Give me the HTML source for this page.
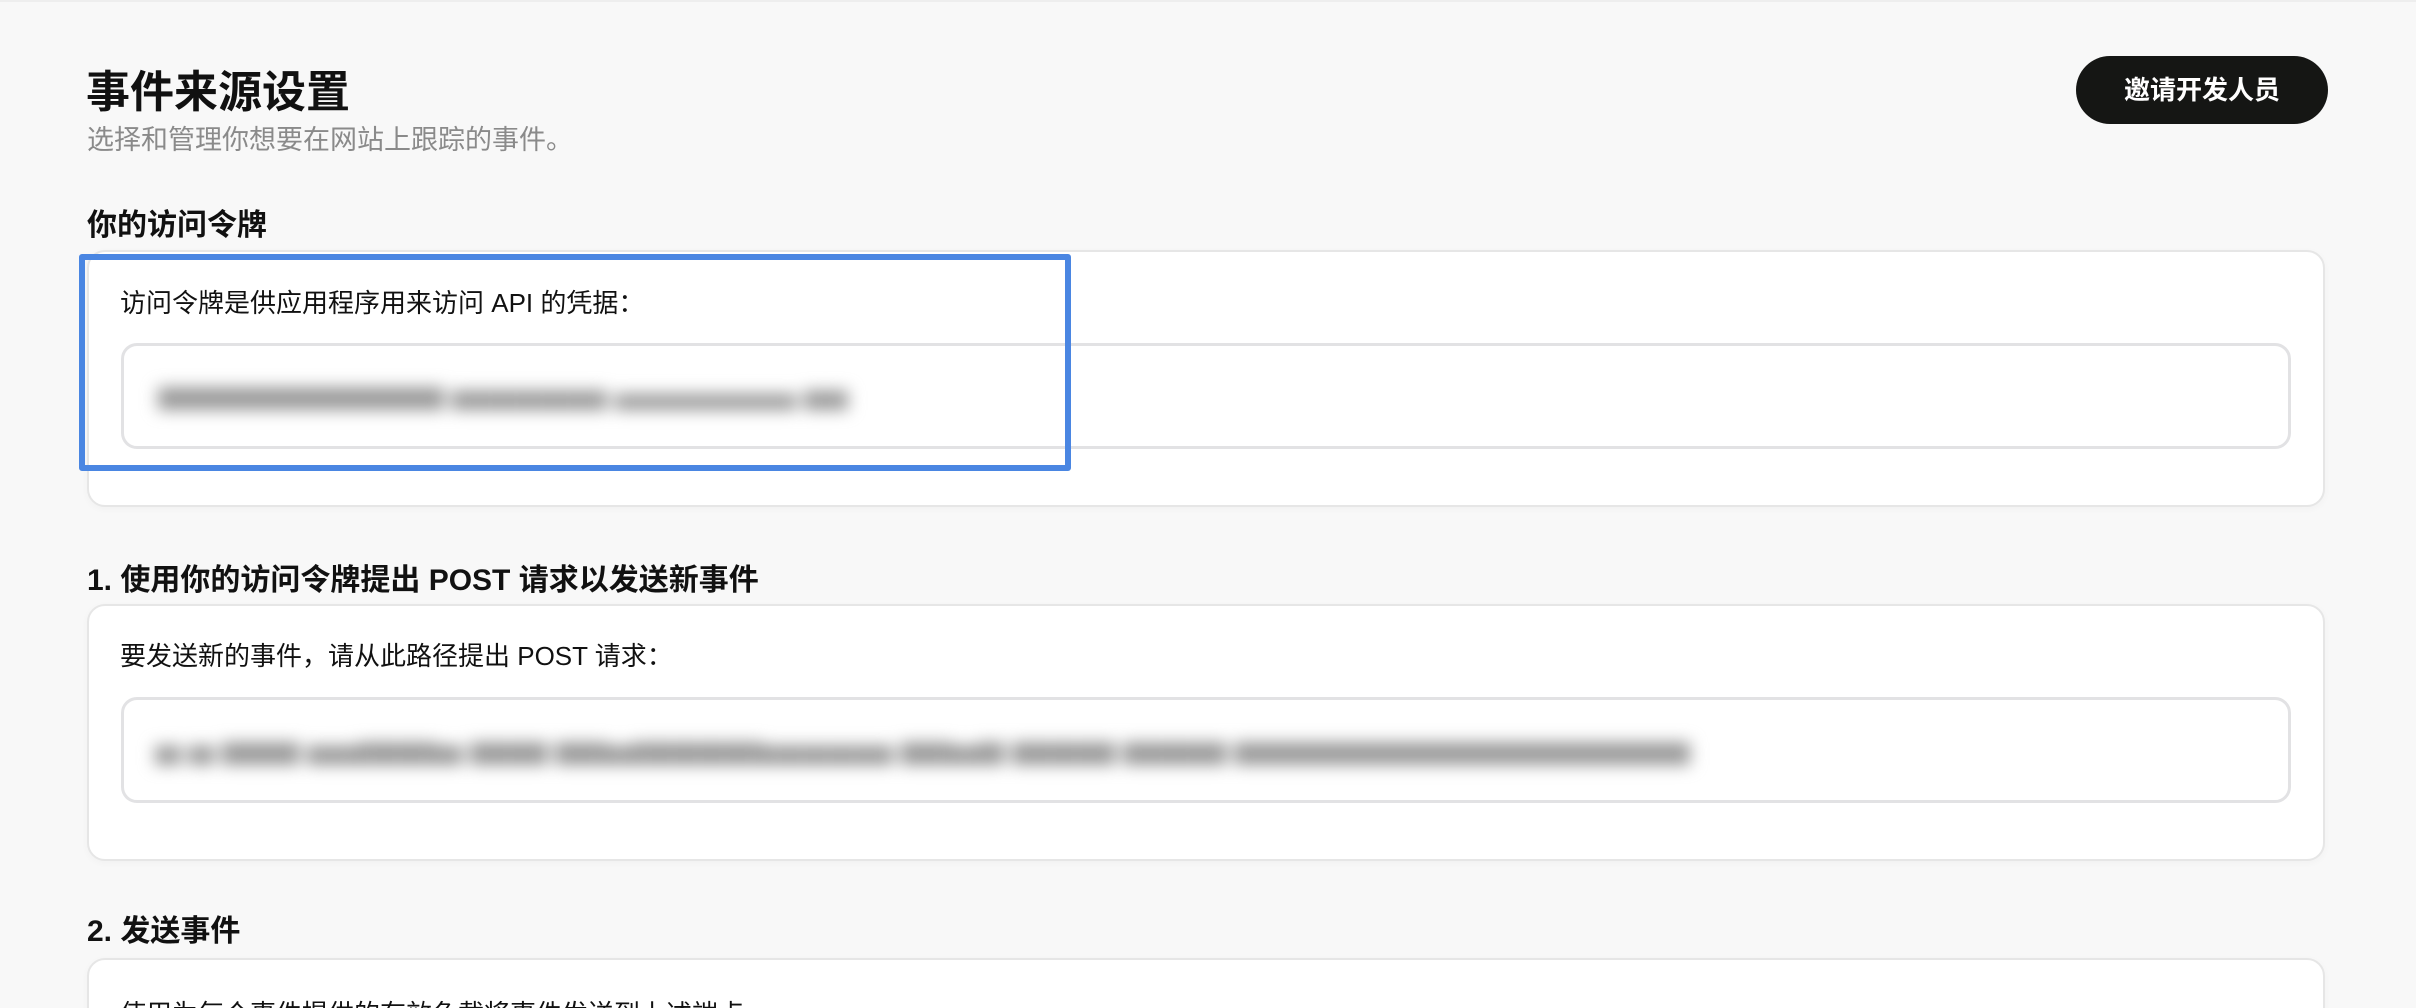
<!DOCTYPE html>
<html style="height:1008px;overflow:hidden"><head><meta charset="utf-8"><style>
*{margin:0;padding:0;box-sizing:border-box}
body{width:2416px;height:1008px;overflow:hidden;background:#f8f8f8;font-family:"Liberation Sans","Noto Sans CJK SC",sans-serif;color:#111;position:relative}
.a{position:absolute;white-space:nowrap}
.card{position:absolute;left:87px;width:2238px;background:#fff;border:2px solid #e6e6e6;border-radius:18px;box-shadow:0 2px 8px rgba(0,0,0,.03)}
.inp{position:absolute;left:121px;width:2170px;height:106px;border:3px solid #e2e2e4;border-radius:16px;background:#fff}
.blur{position:absolute;filter:blur(8px);color:#999;font-size:26px;white-space:nowrap;overflow:hidden}
h2{font-size:30px;font-weight:bold}
</style></head><body>
<div style="position:absolute;left:0;top:0;width:2416px;height:2px;background:#eee"></div>
<div class="a" style="left:86px;top:56px;font-size:44px;font-weight:bold">事件来源设置</div>
<div class="a" style="left:87px;top:118px;font-size:27px;color:#8a8a8a">选择和管理你想要在网站上跟踪的事件。</div>
<div class="a" style="left:2076px;top:56px;width:252px;height:68px;border-radius:34px;background:#151614;color:#fff;font-size:26px;font-weight:bold;text-align:center;line-height:68px">邀请开发人员</div>

<h2 class="a" style="left:87px;top:200px">你的访问令牌</h2>
<div class="card" style="top:250px;height:257px"></div>
<div class="a" style="left:120px;top:283px;font-size:26px">访问令牌是供应用程序用来访问 API 的凭据：</div>
<div class="inp" style="top:343px"></div>
<div class="blur" style="left:158px;top:378px;width:690px">▇▇▇▇▇▇▇▇▇▇▇ ▆▆▆▆▆▆ ▅▅▅▅▅▅▅ ▆▆ ▇▇</div>
<div style="position:absolute;left:79px;top:254px;width:992px;height:217px;border:6px solid #4a86e2;border-radius:3px"></div>

<h2 class="a" style="left:87px;top:555px">1. 使用你的访问令牌提出 POST 请求以发送新事件</h2>
<div class="card" style="top:604px;height:257px"></div>
<div class="a" style="left:120px;top:636px;font-size:26px">要发送新的事件，请从此路径提出 POST 请求：</div>
<div class="inp" style="top:697px"></div>
<div class="blur" style="left:155px;top:733px;width:1535px">▆ ▆ ▇▇▇ ▆▆▇▇▇▆ ▇▇▇ ▇▇▆▇▇▇▇▇▆▆▆▆▆ ▇▇▆▇ ▇▇▇▇ ▇▇▇▇ ▇▇▇▇▇▇▇▇▇▇▇▇▇▇▇▇▇▇▇▇▇▇▇▇</div>

<h2 class="a" style="left:87px;top:906px">2. 发送事件</h2>
<div class="card" style="top:958px;height:100px"></div>
<div class="a" style="left:120px;top:994px;font-size:26px">使用为每个事件提供的有效负载将事件发送到上述端点</div>
</body></html>
